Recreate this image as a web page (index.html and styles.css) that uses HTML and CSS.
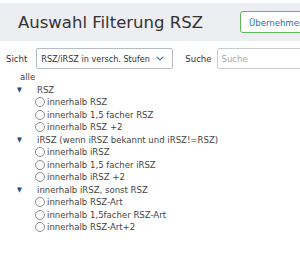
FILE: index.html
```html
<!DOCTYPE html>
<html lang="de">
<head>
    <meta charset="UTF-8">
    <meta name="viewport" content="width=device-width, initial-scale=1.0">
    <title>Auswahl Filterung RSZ</title>
    <link rel="stylesheet" href="styles.css">
</head>
<body>
    <div class="header">
        <h1 class="title">Auswahl Filterung RSZ</h1>
        <button type="button" class="btn-apply">Übernehmen</button>
    </div>

    <div class="toolbar">
        <label class="label">Sicht</label>
        <div class="select">
            <span>RSZ/iRSZ in versch. Stufen</span>
            <svg class="chevron" width="8" height="5" viewBox="0 0 8 5">
                <path d="M0.8 0.8 L4 4 L7.2 0.8" fill="none" stroke="#3a78c2" stroke-width="1.2"/>
            </svg>
        </div>
        <label class="label label-search">Suche</label>
        <input type="text" class="search" placeholder="Suche">
    </div>

    <div class="tree">
        <div class="root">alle</div>

        <div class="group">
            <div class="group-head"><span class="caret">&#9660;</span>RSZ</div>
            <label class="option"><span class="radio"></span>innerhalb RSZ</label>
            <label class="option"><span class="radio"></span>innerhalb 1,5 facher RSZ</label>
            <label class="option"><span class="radio"></span>innerhalb RSZ +2</label>
        </div>

        <div class="group">
            <div class="group-head"><span class="caret">&#9660;</span>iRSZ (wenn iRSZ bekannt und iRSZ!=RSZ)</div>
            <label class="option"><span class="radio"></span>innerhalb iRSZ</label>
            <label class="option"><span class="radio"></span>innerhalb 1,5 facher iRSZ</label>
            <label class="option"><span class="radio"></span>innerhalb iRSZ +2</label>
        </div>

        <div class="group">
            <div class="group-head"><span class="caret">&#9660;</span>innerhalb iRSZ, sonst RSZ</div>
            <label class="option"><span class="radio"></span>innerhalb RSZ-Art</label>
            <label class="option"><span class="radio"></span>innerhalb 1,5facher RSZ-Art</label>
            <label class="option"><span class="radio"></span>innerhalb RSZ-Art+2</label>
        </div>
    </div>
</body>
</html>
```

FILE: styles.css
```css
body {
    margin: 0;
    padding: 0;
    background: #fff;
    color: #444;
    font-family: 'DejaVu Sans Condensed', 'DejaVu Sans', sans-serif;
    font-size: 9.5px;
    overflow: hidden;
}

.header {
    margin-top: 3px;
    height: 38px;
    background: #eceef1;
    display: flex;
    align-items: center;
    padding-left: 18px;
    overflow: hidden;
}

.title {
    margin: 0;
    font-family: 'DejaVu Sans', sans-serif;
    font-weight: normal;
    font-size: 16.5px;
    color: #333;
    white-space: nowrap;
}

.btn-apply {
    flex-shrink: 0;
    margin-left: 37px;
    width: 80px;
    height: 22px;
    padding: 0 0 0 8px;
    text-align: left;
    background: #fff;
    border: 1px solid #5cb85c;
    border-radius: 3px;
    color: #2a6ebb;
    font-family: 'DejaVu Sans Condensed', 'DejaVu Sans', sans-serif;
    font-size: 9.5px;
    white-space: nowrap;
}

.toolbar {
    display: flex;
    align-items: center;
    margin-top: 7px;
    padding-left: 6px;
    height: 21px;
    white-space: nowrap;
    overflow: hidden;
}

.label {
    flex-shrink: 0;
    color: #333;
    margin-right: 9px;
}

.label-search {
    margin-left: 12px;
    margin-right: 5px;
}

.select {
    box-sizing: border-box;
    flex-shrink: 0;
    width: 137px;
    height: 21px;
    border: 1px solid #b9bcc0;
    border-radius: 2px;
    display: flex;
    align-items: center;
    padding: 0 8px 0 4px;
    color: #333;
    font-size: 9px;
    justify-content: space-between;
}

.search {
    box-sizing: border-box;
    flex-shrink: 0;
    width: 90px;
    height: 21px;
    border: 1px solid #c8cbcf;
    border-radius: 2px;
    padding: 0 4px;
    font-family: inherit;
    font-size: 9.5px;
}

.search::placeholder {
    color: #a5a8ac;
}

.tree {
    padding-left: 20px;
    line-height: 12.5px;
    margin-top: 2px;
}

.group-head {
    display: flex;
    align-items: center;
    margin-left: -3px;
}

.caret {
    color: #1f4f7e;
    font-size: 7px;
    width: 20px;
}

.option {
    display: flex;
    align-items: center;
    padding-left: 15px;
}

.radio {
    box-sizing: border-box;
    width: 10px;
    height: 10px;
    border: 1px solid #8a8d91;
    border-radius: 50%;
    margin-right: 2px;
    background: #fff;
}
```
